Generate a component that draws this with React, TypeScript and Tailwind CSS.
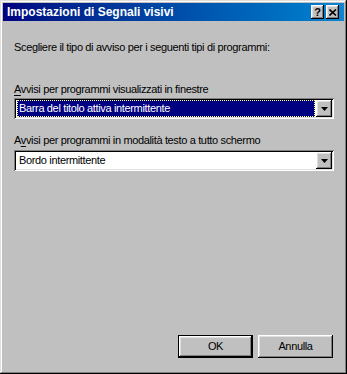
const raised =
  "shadow-[inset_-1px_-1px_#000,inset_1px_1px_#fff,inset_-2px_-2px_#808080,inset_2px_2px_#dfdfdf]";
const sunken =
  "shadow-[inset_1px_1px_#808080,inset_-1px_-1px_#fff,inset_2px_2px_#000,inset_-2px_-2px_#dfdfdf]";

const Arrow = () => (
  <div className={`w-[16px] h-[17px] bg-[#c0c0c0] flex items-center justify-center ${raised}`}>
    <svg width="7" height="4" viewBox="0 0 7 4">
      <path d="M0 0h7L3.5 4z" fill="#000" />
    </svg>
  </div>
);

const Combo = ({ value, focused }: { value: string; focused?: boolean }) => (
  <div className={`h-[21px] w-[320px] bg-white flex items-center p-[2px] ${sunken}`}>
    <div className="flex-1 h-full flex items-center pl-[1px] pr-[1px]">
      <div
        className={
          focused
            ? "w-full h-[17px] bg-[#000080] text-white outline-1 outline-dotted outline-[#ffff80] -outline-offset-1 flex items-center pl-[2px]"
            : "w-full h-[17px] text-black flex items-center pl-[2px]"
        }
      >
        {value}
      </div>
    </div>
    <Arrow />
  </div>
);

const Btn = ({ label, def }: { label: string; def?: boolean }) => (
  <div className={def ? "border border-black" : ""}>
    <div
      className={`${def ? "w-[73px] h-[21px]" : "w-[75px] h-[23px]"} bg-[#c0c0c0] flex items-center justify-center text-black ${raised}`}
    >
      {label}
    </div>
  </div>
);

export default function App() {
  return (
    <div
      className="w-[347px] h-[374px] bg-[#c0c0c0] p-[3px] flex flex-col text-[11px] leading-[13px] tracking-[-0.35px] shadow-[inset_-1px_-1px_#000,inset_1px_1px_#dfdfdf,inset_-2px_-2px_#808080,inset_2px_2px_#fff]"
      style={{ fontFamily: '"Liberation Sans", Arial, sans-serif' }}
    >
      <div className="h-[18px] bg-gradient-to-r from-[#000080] to-[#1084d0] flex items-center pl-[4px] pr-[5px]">
        <span className="text-white font-bold text-[12px] tracking-[0px] flex-1">
          Impostazioni di Segnali visivi
        </span>
        <div className={`w-[13px] h-[14px] bg-[#c0c0c0] flex items-center justify-center font-bold text-[11px] text-black ${raised}`}>
          ?
        </div>
        <div className={`ml-[2px] w-[13px] h-[14px] bg-[#c0c0c0] flex items-center justify-center ${raised}`}>
          <svg width="8" height="7" viewBox="0 0 8 7">
            <path d="M0.5 0.5L7 6.5M7 0.5L0.5 6.5" stroke="#000" strokeWidth="1.6" />
          </svg>
        </div>
      </div>

      <div className="flex-1 flex flex-col pl-[11px] pr-[11px] pb-[13px] text-black">
        <div className="mt-[20px]">Scegliere il tipo di avviso per i seguenti tipi di programmi:</div>

        <div className="mt-[29px]">
          <span className="underline underline-offset-2">A</span>vvisi per programmi visualizzati in finestre
        </div>
        <div className="mt-[2px]">
          <Combo value="Barra del titolo attiva intermittente" focused />
        </div>

        <div className="mt-[15px]">
          A<span className="underline underline-offset-2">v</span>visi per programmi in modalità testo a tutto schermo
        </div>
        <div className="mt-[3px]">
          <Combo value="Bordo intermittente" />
        </div>

        <div className="mt-auto flex justify-end gap-[5px]">
          <Btn label="OK" def />
          <Btn label="Annulla" />
        </div>
      </div>
    </div>
  );
}
